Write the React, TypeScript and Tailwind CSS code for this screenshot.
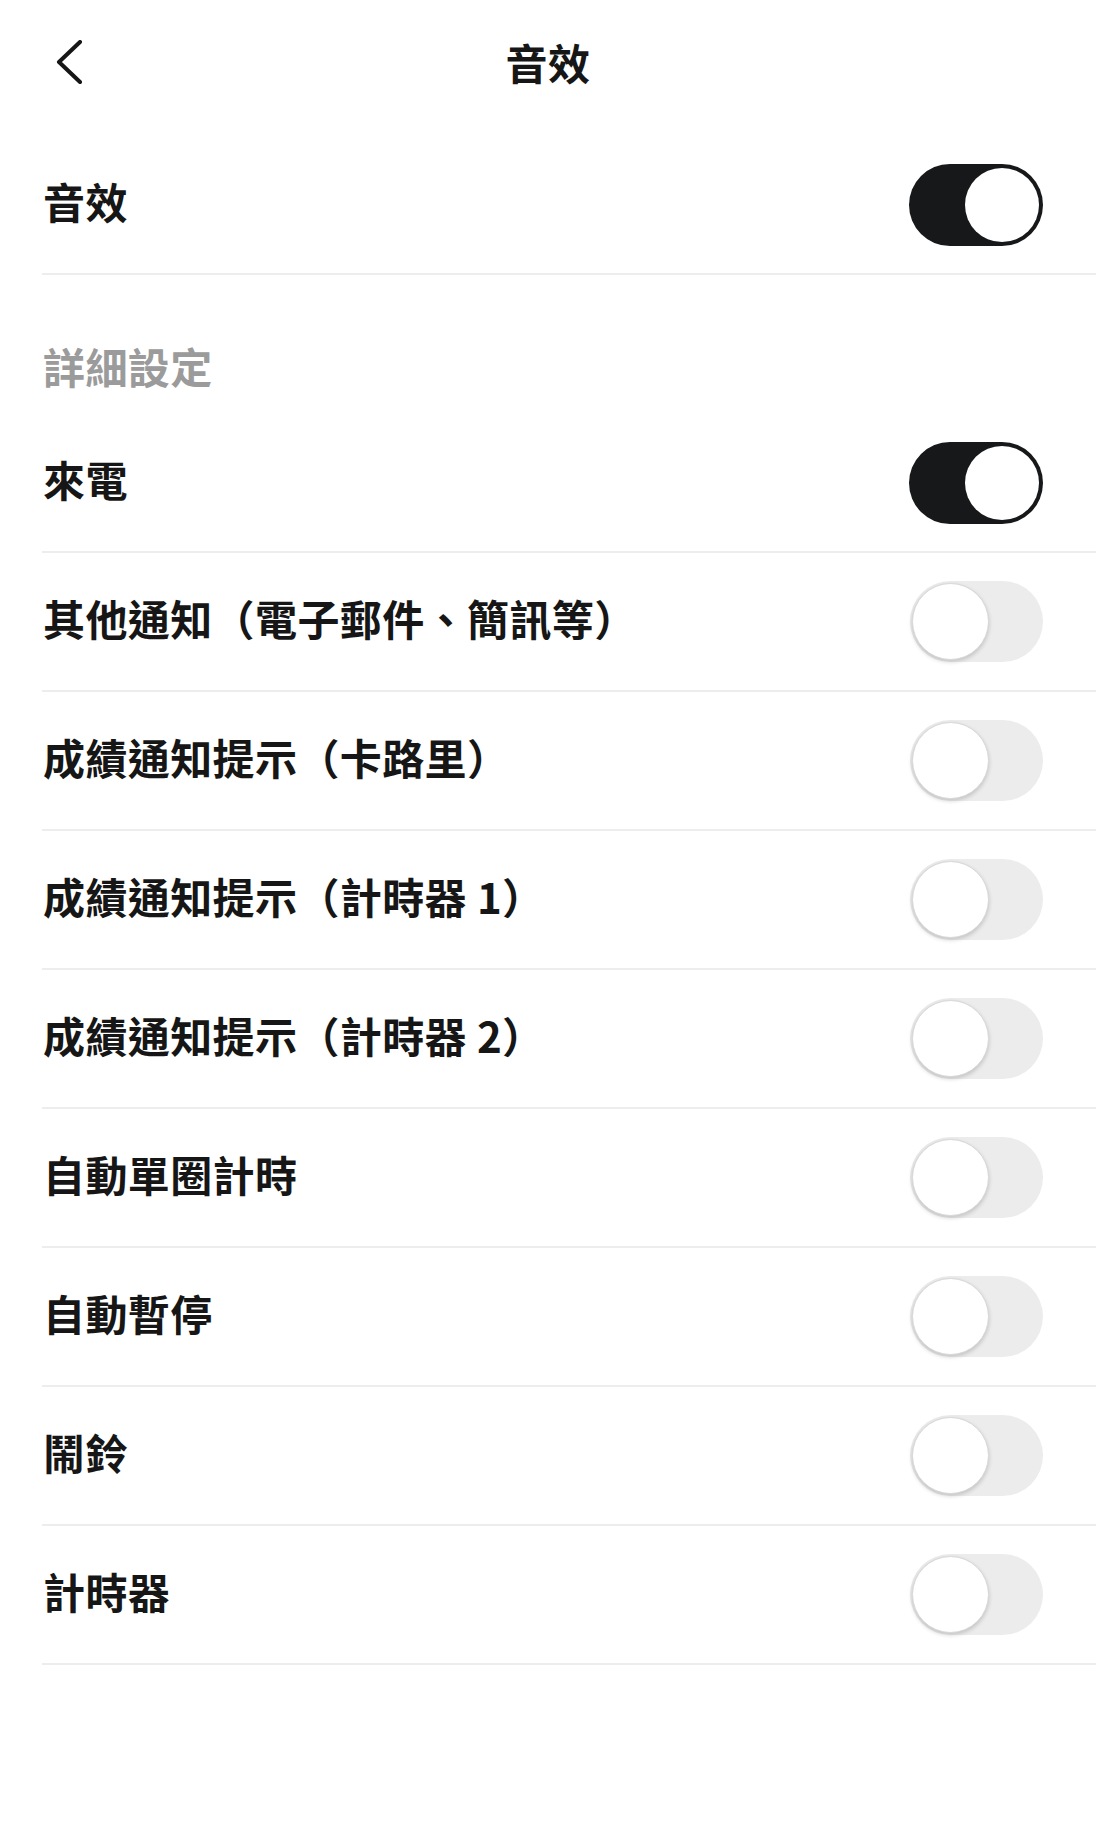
import React from "react";

const font = { fontFamily: '"Noto Sans CJK TC", "Noto Sans CJK SC", sans-serif' };

function Toggle({ on }: { on: boolean }) {
  if (on) {
    return (
      <div className="flex h-[82px] w-[134px] shrink-0 items-center justify-end rounded-full bg-[#17181a] p-[4px]">
        <div className="h-[74px] w-[74px] rounded-full bg-white" />
      </div>
    );
  }
  return (
    <div className="flex h-[81px] w-[133px] shrink-0 items-center justify-start rounded-full bg-[#ececec] p-[2px]">
      <div className="h-[77px] w-[77px] rounded-full border border-[#d8d8d8] bg-white shadow-[0_2px_4px_rgba(0,0,0,0.18)]" />
    </div>
  );
}

function Divider() {
  return <div className="ml-[42px] h-[2px] bg-[#ededed]" />;
}

function Row({ label, on }: { label: string; on: boolean }) {
  return (
    <>
      <div className="flex h-[137px] items-center justify-between pl-[43px] pr-[53px]">
        <span className="pb-[7px] text-[42px] font-bold leading-none tracking-[0.4px] text-[#161616]">{label}</span>
        <Toggle on={on} />
      </div>
      <Divider />
    </>
  );
}

export default function App() {
  const rows: { label: string; on: boolean }[] = [
    { label: "來電", on: true },
    { label: "其他通知（電子郵件、簡訊等）", on: false },
    { label: "成績通知提示（卡路里）", on: false },
    { label: "成績通知提示（計時器 1）", on: false },
    { label: "成績通知提示（計時器 2）", on: false },
    { label: "自動單圈計時", on: false },
    { label: "自動暫停", on: false },
    { label: "鬧鈴", on: false },
    { label: "計時器", on: false },
  ];
  return (
    <div className="h-[1840px] w-[1096px] bg-white" style={font}>
      <div className="grid h-[124px] grid-cols-[1fr_auto_1fr] items-center">
        <div className="pl-[54px]">
          <svg width="30" height="44" viewBox="0 0 30 44" fill="none">
            <path d="M26 2 L5 22 L26 42" stroke="#161616" strokeWidth="4" strokeLinecap="round" strokeLinejoin="round" />
          </svg>
        </div>
        <div className="text-[42px] font-bold leading-none tracking-[0.4px] text-[#161616]">音效</div>
        <div />
      </div>
      <div className="pt-[12px]">
        <Row label="音效" on={true} />
      </div>
      <div className="flex h-[139px] items-end pb-[20px] pl-[43px]">
        <span className="text-[42px] font-bold leading-[56px] tracking-[0.4px] text-[#9b9b9b]">詳細設定</span>
      </div>
      {rows.map((r) => (
        <Row key={r.label} label={r.label} on={r.on} />
      ))}
    </div>
  );
}
